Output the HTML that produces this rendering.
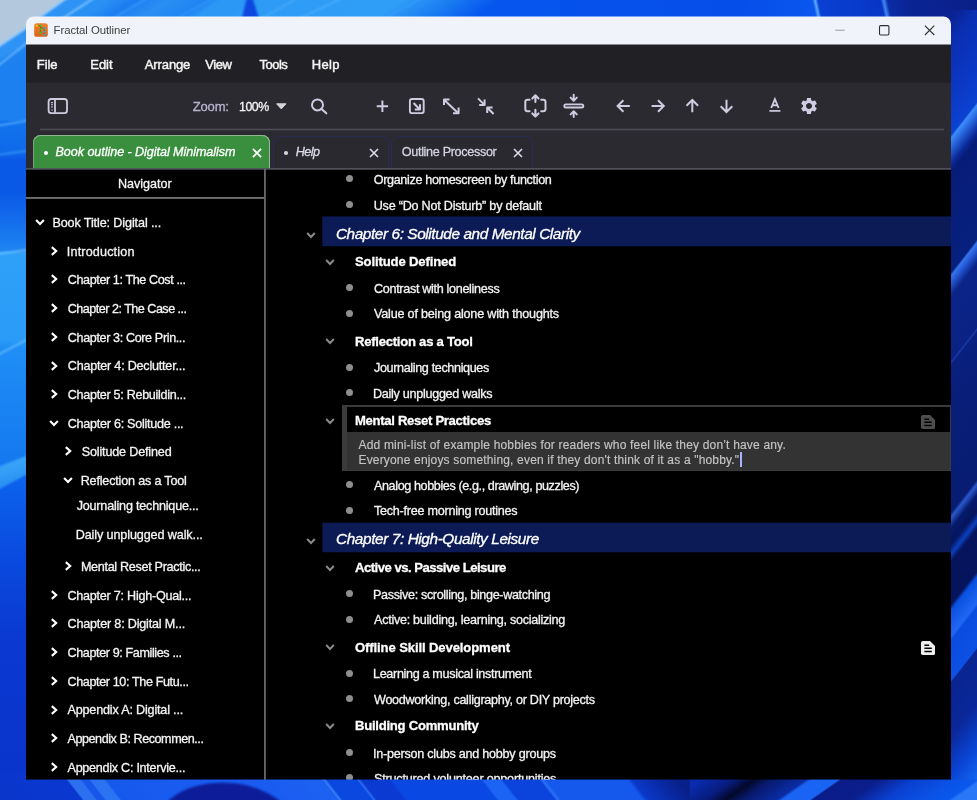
<!DOCTYPE html>
<html lang="en"><head><meta charset="utf-8"><title>Fractal Outliner</title>
<style>
html,body{margin:0;padding:0}
body{width:977px;height:800px;overflow:hidden;position:relative;background:#0b49d8;font-family:"Liberation Sans",sans-serif}
.abs,.t,svg.i{position:absolute}
.t{white-space:nowrap;line-height:20px;height:20px;display:block;-webkit-text-stroke:0.3px currentColor}
#win{position:absolute;left:26px;top:40px;width:925px;height:740px;background:#000;overflow:hidden}
#page{position:absolute;left:0;top:0;width:977px;height:800px}
</style></head><body>
<svg class="abs" style="left:0;top:0" width="977" height="800" viewBox="0 0 977 800">
<defs>
<linearGradient id="gL" x1="0" y1="0" x2="0" y2="800" gradientUnits="userSpaceOnUse">
<stop offset="0" stop-color="#2a8ef3"/><stop offset="0.08" stop-color="#1c80f0"/><stop offset="0.15" stop-color="#1c80f0"/><stop offset="0.152" stop-color="#1272ec"/>
<stop offset="0.19" stop-color="#0f6aea"/><stop offset="0.20" stop-color="#0a58e6"/><stop offset="0.24" stop-color="#0a58e6"/><stop offset="0.30" stop-color="#1a7cf0"/><stop offset="0.313" stop-color="#1f84f2"/>
<stop offset="0.316" stop-color="#2fa0f8"/><stop offset="0.425" stop-color="#2a9cf8"/><stop offset="0.435" stop-color="#1f8ef5"/><stop offset="0.583" stop-color="#1478f0"/>
<stop offset="0.59" stop-color="#0c64ee"/><stop offset="0.7" stop-color="#0a4ade"/><stop offset="0.8" stop-color="#0a38d0"/><stop offset="1" stop-color="#0a34cc"/>
</linearGradient>
<linearGradient id="gT" x1="0" y1="0" x2="977" y2="0" gradientUnits="userSpaceOnUse" gradientTransform="translate(0,8) skewX(-55) translate(0,-8)">
<stop offset="0" stop-color="#2b8ff2"/><stop offset="0.10" stop-color="#2a90f4"/><stop offset="0.125" stop-color="#1c7cf0"/><stop offset="0.16" stop-color="#2a8ef4"/><stop offset="0.20" stop-color="#1f84f2"/><stop offset="0.215" stop-color="#2c98f6"/><stop offset="0.245" stop-color="#2c98f6"/>
<stop offset="0.262" stop-color="#2e9cf6"/><stop offset="0.40" stop-color="#2f9ef7"/>
<stop offset="0.45" stop-color="#1b7df2"/><stop offset="0.50" stop-color="#0556ee"/><stop offset="1" stop-color="#0552ec"/>
</linearGradient>
<linearGradient id="gT2" x1="0" y1="0" x2="977" y2="0" gradientUnits="userSpaceOnUse" gradientTransform="translate(0,8) skewX(12) translate(0,-8)">
<stop offset="0.5" stop-color="#0552ec"/><stop offset="0.75" stop-color="#064eea"/>
<stop offset="0.833" stop-color="#0a56ee"/><stop offset="0.836" stop-color="#5aa8ff"/><stop offset="0.839" stop-color="#0a40d4"/><stop offset="0.903" stop-color="#0836c4"/><stop offset="0.906" stop-color="#4088f4"/>
<stop offset="0.910" stop-color="#0a2ca8"/><stop offset="0.93" stop-color="#0a2494"/><stop offset="1" stop-color="#0a2088"/>
</linearGradient>
<linearGradient id="gR" x1="0" y1="0" x2="0" y2="800" gradientUnits="userSpaceOnUse" gradientTransform="translate(964,0) skewY(-52) translate(-964,0)">
<stop offset="0" stop-color="#0a2292"/><stop offset="0.03" stop-color="#0a2eb0"/><stop offset="0.10" stop-color="#0b38c4"/><stop offset="0.148" stop-color="#0c42d2"/>
<stop offset="0.152" stop-color="#3e8cf8"/><stop offset="0.162" stop-color="#2a6ce4"/><stop offset="0.185" stop-color="#0a2898"/><stop offset="0.195" stop-color="#071c78"/><stop offset="0.320" stop-color="#07207e"/>
<stop offset="0.324" stop-color="#3674ee"/><stop offset="0.333" stop-color="#2458d4"/><stop offset="0.350" stop-color="#0a2488"/><stop offset="0.43" stop-color="#0a2284"/><stop offset="0.432" stop-color="#1a3ca8"/><stop offset="0.436" stop-color="#0a2080"/>
<stop offset="0.5" stop-color="#081e78"/><stop offset="0.62" stop-color="#071c72"/><stop offset="0.626" stop-color="#2a58cc"/><stop offset="0.64" stop-color="#061a6c"/><stop offset="0.66" stop-color="#05155e"/><stop offset="0.672" stop-color="#0a40c0"/><stop offset="0.682" stop-color="#05145c"/>
<stop offset="0.735" stop-color="#05145c"/><stop offset="0.742" stop-color="#0a50e0"/><stop offset="0.775" stop-color="#2068f4"/><stop offset="0.78" stop-color="#0a4ce0"/><stop offset="0.83" stop-color="#0c50e4"/>
<stop offset="0.833" stop-color="#0a2490"/><stop offset="0.90" stop-color="#0a289a"/><stop offset="0.95" stop-color="#0a44d4"/><stop offset="1" stop-color="#1468f4"/>
</linearGradient>
<linearGradient id="gB1" x1="0" y1="0" x2="977" y2="0" gradientUnits="userSpaceOnUse" gradientTransform="translate(0,790) skewX(38) translate(0,-790)">
<stop offset="0" stop-color="#0a36cc"/><stop offset="0.076" stop-color="#0a38d0"/><stop offset="0.078" stop-color="#2c70f0"/><stop offset="0.09" stop-color="#2c70f0"/>
<stop offset="0.092" stop-color="#1756e8"/><stop offset="0.099" stop-color="#1756e8"/><stop offset="0.101" stop-color="#2a74f4"/><stop offset="0.114" stop-color="#2a74f4"/><stop offset="0.117" stop-color="#1559ec"/>
<stop offset="0.20" stop-color="#1a5cf0"/><stop offset="0.28" stop-color="#1a5cf0"/><stop offset="0.338" stop-color="#1c62f2"/><stop offset="0.340" stop-color="#3a80f8"/><stop offset="0.343" stop-color="#0a48e0"/>
<stop offset="0.373" stop-color="#0a48e0"/><stop offset="0.375" stop-color="#2a6cf0"/><stop offset="0.378" stop-color="#0a3ad2"/><stop offset="0.405" stop-color="#0a3ad2"/><stop offset="0.41" stop-color="#0a48e4"/>
<stop offset="0.50" stop-color="#0a48e4"/><stop offset="0.503" stop-color="#1c64f4"/><stop offset="0.52" stop-color="#1c64f4"/><stop offset="0.523" stop-color="#0a44dc"/><stop offset="0.56" stop-color="#0a44dc"/><stop offset="0.563" stop-color="#2a70f4"/>
<stop offset="0.567" stop-color="#1458ec"/><stop offset="0.65" stop-color="#1458ec"/><stop offset="0.655" stop-color="#0a38c8"/><stop offset="0.70" stop-color="#08208c"/><stop offset="1" stop-color="#08208c"/>
</linearGradient>
<linearGradient id="gB2" x1="0" y1="0" x2="977" y2="0" gradientUnits="userSpaceOnUse" gradientTransform="translate(0,790) skewX(-55) translate(0,-790)">
<stop offset="0.70" stop-color="#0a2cb0"/><stop offset="0.735" stop-color="#081c80"/><stop offset="0.757" stop-color="#03082a"/><stop offset="0.775" stop-color="#081a70"/><stop offset="0.81" stop-color="#0a2ca4"/>
<stop offset="0.815" stop-color="#1a64f4"/><stop offset="0.843" stop-color="#1a64f4"/><stop offset="0.846" stop-color="#0a1c88"/><stop offset="0.885" stop-color="#0a1e8c"/>
<stop offset="0.92" stop-color="#0a40d0"/><stop offset="0.965" stop-color="#0a54e8"/><stop offset="0.985" stop-color="#0a58ec"/><stop offset="0.99" stop-color="#2a78f8"/><stop offset="1" stop-color="#2a78f8"/>
</linearGradient>
<linearGradient id="gBand" x1="0" y1="0" x2="0.25" y2="1"><stop offset="0" stop-color="#46aefa"/><stop offset="0.5" stop-color="#35a0f6"/><stop offset="1" stop-color="#2388f2"/></linearGradient>
<filter id="bl" filterUnits="userSpaceOnUse" x="-30" y="-30" width="1037" height="860"><feGaussianBlur stdDeviation="0.9"/></filter>
</defs>
<rect width="977" height="800" fill="#0b49d8"/>
<rect x="0" y="0" width="560" height="30" fill="url(#gT)"/><rect x="560" y="0" width="417" height="30" fill="url(#gT2)"/>
<rect x="0" y="770" width="690" height="30" fill="url(#gB1)"/>
<rect x="690" y="770" width="287" height="30" fill="url(#gB2)"/>
<rect x="0" y="0" width="40" height="772" fill="url(#gL)"/>
<rect x="937" y="10" width="40" height="790" fill="url(#gR)"/>
<g filter="url(#bl)">
<path d="M160,812 Q175,786 215,783 Q262,780 292,812Z" fill="#0a1e98"/>
<polygon points="242,18 247,-3 252,-3 259,18" fill="#0a46e0"/>
<polyline points="300,-3 262,18" stroke="#62b8ff" stroke-width="1.4" fill="none" opacity=".7"/><polyline points="345,-3 300,18" stroke="#62b8ff" stroke-width="1.4" fill="none" opacity=".6"/><polyline points="425,-3 385,18" stroke="#4aa4fa" stroke-width="1.4" fill="none" opacity=".6"/>
<polygon points="-30,-30 80,-30 66,-2 40,17 26,28 -30,66" fill="#b3c8dd"/>
<polygon points="66,-2 40,17 26,28 -10,52 -10,66 26,44 60,20 95,-2" fill="#2d93f4"/>
<polyline points="68,-3 40,17 26,28 -10,52" stroke="#8fd0ff" stroke-width="1.6" fill="none"/>
<polyline points="96,-3 60,20 26,44 -10,72" stroke="#7cc8ff" stroke-width="1.5" fill="none"/>
<polyline points="150,-3 120,14 100,30" stroke="#4aaaff" stroke-width="1.4" fill="none" opacity=".7"/>
<polyline points="215,-3 170,22" stroke="#4aaaff" stroke-width="1.4" fill="none" opacity=".6"/>
<polyline points="-10,127 26,121 40,119" stroke="#62baff" stroke-width="1.6" fill="none" opacity=".9"/>
<polyline points="-10,156 26,151 40,149" stroke="#48a4fa" stroke-width="1.6" fill="none" opacity=".8"/>
<polyline points="-10,255 26,250 40,248" stroke="#7accff" stroke-width="1.5" fill="none" opacity=".9"/>
<polygon points="-10,470 26,456 44,449 44,468 26,475 -10,494" fill="url(#gBand)"/>
<polyline points="-10,359 26,340 40,334" stroke="#6cc6ff" stroke-width="1.7" fill="none" opacity=".85"/>
</g>
</svg>
<div id="win"></div>
<div id="page">
<div class="abs" style="left:26px;top:40px;width:925px;height:43px;background:#212125;"></div>
<svg class="abs" style="left:20px;top:10px" width="940" height="40" viewBox="20 10 940 40"><path d="M26 44.6V24.2A7.7 7.7 0 0 1 33.7 16.45H943.3A7.7 7.7 0 0 1 951 24.2V44.6Z" fill="#f0f3f9"/></svg>
<div class="abs" style="left:26px;top:83px;width:925px;height:86px;background:#2a2a30;"></div>
<svg class="abs" style="left:26px;top:82px" width="925" height="2" viewBox="26 82 925 2"><rect x="26" y="82" width="925" height="0.7" fill="#212125"/><rect x="26" y="82.7" width="925" height="1.3" fill="#2a2a30"/></svg>
<svg class="i" style="left:33.5px;top:23px;" width="14" height="14" viewBox="0 0 14 14"><defs><linearGradient id="og" x1="0" y1="0" x2="0" y2="1"><stop offset="0" stop-color="#f0832a"/><stop offset="1" stop-color="#d9621a"/></linearGradient></defs>
<rect x="0.2" y="0.2" width="13.6" height="13.6" rx="2.6" fill="url(#og)"/>
<path d="M3 2.6H6.5V9.6M6.5 5H10.3V12" stroke="#7a4a10" stroke-width=".7" fill="none"/>
<circle cx="2.8" cy="2.8" r="1" fill="#e8e020"/><circle cx="6.5" cy="2.6" r="1.1" fill="#22c832"/><circle cx="6.5" cy="6.2" r="1.1" fill="#22c832"/><circle cx="6.5" cy="9.6" r="1.1" fill="#22c832"/>
<circle cx="10.4" cy="5.2" r="1.1" fill="#18b0f0"/><circle cx="10.4" cy="8.6" r="1.1" fill="#18b0f0"/><circle cx="10.4" cy="11.8" r="1.1" fill="#18b0f0"/></svg>
<svg class="i" style="left:830px;top:20px;" width="110" height="20" viewBox="0 0 110 20"><path d="M5.2 10.2H14.7" stroke="#9a9a9a" stroke-width="1"/>
<rect x="49.5" y="5.6" width="9.4" height="9.4" rx="1.2" fill="none" stroke="#2e2e2e" stroke-width="1.1"/>
<path d="M94.9 5.6L104.3 15M104.3 5.6L94.9 15" stroke="#2e2e2e" stroke-width="1.1" fill="none"/></svg>
<svg class="i" style="left:0px;top:83px;" width="977" height="52" viewBox="0 83 977 52"><g fill="none" stroke="#cfcbe1" stroke-width="2" stroke-linecap="round" stroke-linejoin="round">
<rect x="48.6" y="99" width="18.4" height="14.2" rx="2.6" stroke-width="1.8"/><path d="M55 99.4V112.8" stroke-linecap="butt" stroke-width="1.8"/>
<path d="M51 102.6h2M51 104.8h2M51 107h2" stroke-width="1.1" stroke-linecap="butt"/><path d="M51 110h2" stroke-width="1.3" stroke="#77768a" stroke-linecap="butt"/>
<circle cx="317.5" cy="104.9" r="5.5" stroke-width="2"/><path d="M321.8 109.2L326.3 113.3" stroke-width="2.1"/>
<path d="M382.4 100.6V111.9M376.7 106.2H388.1" stroke-linecap="butt" stroke-width="2"/>
<rect x="409.9" y="99" width="13.8" height="14.1" rx="2.2" stroke-width="1.9"/><path d="M413.6 103L419.6 109.2M420 104.2V109.6H414.8" stroke-linecap="butt"/>
<path d="M444.6 100.2L458 113M444 105V99.4H449.6M453 113.2H458.6V107.6" stroke-linecap="butt"/>
<path d="M478 98.4L484.2 104.6M484.6 99.6V105H479.2M493.6 114L487.6 108M487.2 113V107.6H492.6" stroke-linecap="butt"/>
<path d="M529.6 99.8H527.6Q525.3 99.8 525.3 102.1V109Q525.3 111.3 527.6 111.3H529.6M541.2 99.8H543.2Q545.5 99.8 545.5 102.1V109Q545.5 111.3 543.2 111.3H541.2"/>
<path d="M535.4 102V95.6M532.3 98.4L535.4 95.3L538.5 98.4M535.4 109.8V116.2M532.3 113.4L535.4 116.5L538.5 113.4" stroke-width="2.1"/>
<rect x="564.3" y="104.4" width="19" height="3.1" rx="1.55" stroke-width="1.9"/>
<path d="M573.7 94.8V100.4M570.6 97.6L573.7 100.7L576.8 97.6M573.7 117V111.6M570.6 114.4L573.7 111.3L576.8 114.4" stroke-width="2"/>
<path d="M629.8 106H618M623.4 100.2L617.6 106L623.4 111.8" stroke-linecap="butt" stroke-linejoin="miter"/>
<path d="M651.6 106H663.4M658 100.2L663.8 106L658 111.8" stroke-linecap="butt" stroke-linejoin="miter"/>
<path d="M692.3 112.2V100.4M686.5 105.8L692.3 100L698.1 105.8" stroke-linecap="butt" stroke-linejoin="miter"/>
<path d="M726.5 99.8V111.6M720.7 106.2L726.5 112L732.3 106.2" stroke-linecap="butt" stroke-linejoin="miter"/>
<path d="M769.4 110.9H780.4" stroke-linecap="butt" stroke-width="1.7"/><path d="M771.2 108L774.9 99.2L778.6 108M772.6 105.2H777.2" stroke-linecap="butt" stroke-linejoin="miter" stroke-width="1.9"/>
</g>
<path d="M276.6 103.8H286L281.3 108.9Z" fill="#d4d4d4" stroke="#d4d4d4" stroke-width="1" stroke-linejoin="round"/>
<g transform="translate(799,96) scale(0.8333)"><path fill="#cfcbe1" d="M19.14 12.94c.04-.3.06-.61.06-.94 0-.32-.02-.64-.07-.94l2.03-1.58c.18-.14.23-.41.12-.61l-1.92-3.32c-.12-.22-.37-.29-.59-.22l-2.39.96c-.5-.38-1.03-.7-1.62-.94l-.36-2.54c-.04-.24-.24-.41-.48-.41h-3.84c-.24 0-.43.17-.47.41l-.36 2.54c-.59.24-1.13.57-1.62.94l-2.39-.96c-.22-.08-.47 0-.59.22L2.74 8.87c-.12.21-.08.47.12.61l2.03 1.58c-.05.3-.09.63-.09.94s.02.64.07.94l-2.03 1.58c-.18.14-.23.41-.12.61l1.92 3.32c.12.22.37.29.59.22l2.39-.96c.5.38 1.03.7 1.62.94l.36 2.54c.05.24.24.41.48.41h3.84c.24 0 .44-.17.47-.41l.36-2.54c.59-.24 1.13-.56 1.62-.94l2.39.96c.22.08.47 0 .59-.22l1.92-3.32c.12-.22.07-.47-.12-.61l-2.01-1.58zM12 15.6c-1.98 0-3.6-1.62-3.6-3.6s1.62-3.6 3.6-3.6 3.6 1.62 3.6 3.6-1.62 3.6-3.6 3.6z"/></g>
<rect x="40" y="128.7" width="904" height="1.6" fill="#4c4c55"/></svg>
<div class="abs" style="left:32.5px;top:135px;width:237.4px;height:33.5px;background:#3a8f3e;border-radius:8px 8px 0 0;box-shadow:inset 0 1px 0 #8fb892, inset 1px 0 0 #7aa57c, inset -1px 0 0 #9ab89c;"></div>
<div class="abs" style="left:273px;top:135.5px;width:113.5px;height:33px;background:#29292f;border-radius:8px 8px 0 0;border:1px solid #2b2b58;border-bottom:none;box-sizing:content-box;"></div>
<div class="abs" style="left:391px;top:135.5px;width:140px;height:33px;background:#29292f;border-radius:8px 8px 0 0;border:1px solid #2b2b58;border-bottom:none;box-sizing:content-box;"></div>
<div class="abs" style="left:44px;top:151px;width:4px;height:4px;background:#ffffff;border-radius:50%;"></div>
<div class="abs" style="left:284px;top:151.2px;width:3.6px;height:3.6px;background:#d0d0dc;border-radius:50%;"></div>
<svg class="i" style="left:249.5px;top:145.7px;" width="14" height="14" viewBox="0 0 14 14"><path d="M2.9000000000000004 2.9000000000000004L11.1 11.1M11.1 2.9000000000000004L2.9000000000000004 11.1" stroke="#ffffff" stroke-width="1.7" fill="none"/></svg>
<svg class="i" style="left:367.4px;top:145.7px;" width="14" height="14" viewBox="0 0 14 14"><path d="M3.0 3.0L11.0 11.0M11.0 3.0L3.0 11.0" stroke="#dcdcea" stroke-width="1.6" fill="none"/></svg>
<svg class="i" style="left:511.20000000000005px;top:145.7px;" width="14" height="14" viewBox="0 0 14 14"><path d="M3.0 3.0L11.0 11.0M11.0 3.0L3.0 11.0" stroke="#dcdcea" stroke-width="1.6" fill="none"/></svg>
<div class="abs" style="left:26px;top:169px;width:925px;height:611px;background:#000;"></div>
<svg class="i" style="left:26px;top:167px;" width="925" height="4" viewBox="0 0 925 4"><rect x="0" y="1.1" width="925" height="1.6" fill="#55555e"/></svg>
<svg class="i" style="left:263px;top:169px;" width="4" height="611" viewBox="0 0 4 611"><rect x="1.05" y="0" width="1.75" height="611" fill="#6c6c6c"/></svg>
<svg class="i" style="left:26px;top:196px;" width="240" height="4" viewBox="0 0 240 4"><rect x="0" y="1" width="238" height="1.9" fill="#6e6e6e"/></svg>
<svg class="i" style="left:320px;top:214px;" width="631" height="34" viewBox="320 214 631 34"><rect x="322.3" y="216.4" width="630" height="29.8" fill="#0c1b56"/></svg>
<svg class="i" style="left:320px;top:520px;" width="631" height="34" viewBox="320 520 631 34"><rect x="322.4" y="522.75" width="630" height="29.5" fill="#0c1b56"/></svg>
<div class="abs" style="left:342px;top:405.2px;width:609px;height:66.3px;background:#3b3b3b;"></div>
<div class="abs" style="left:347px;top:407px;width:603px;height:24.8px;background:#000;"></div>
<div class="abs" style="left:347px;top:431.8px;width:603px;height:38.6px;background:#333333;"></div>
<div class="abs" style="left:740.3px;top:452px;width:1.6px;height:14.5px;background:#aab2ff;"></div>
<div class="abs" style="left:346px;top:174.85px;width:7.1px;height:7.1px;background:#8e8e8e;border-radius:50%;"></div>
<div class="abs" style="left:346px;top:200.85px;width:7.1px;height:7.1px;background:#8e8e8e;border-radius:50%;"></div>
<div class="abs" style="left:346px;top:284.15px;width:7.1px;height:7.1px;background:#8e8e8e;border-radius:50%;"></div>
<div class="abs" style="left:346px;top:310.05px;width:7.1px;height:7.1px;background:#8e8e8e;border-radius:50%;"></div>
<div class="abs" style="left:346px;top:363.95px;width:7.1px;height:7.1px;background:#8e8e8e;border-radius:50%;"></div>
<div class="abs" style="left:346px;top:389.34999999999997px;width:7.1px;height:7.1px;background:#8e8e8e;border-radius:50%;"></div>
<div class="abs" style="left:346px;top:481.05px;width:7.1px;height:7.1px;background:#8e8e8e;border-radius:50%;"></div>
<div class="abs" style="left:346px;top:507.05px;width:7.1px;height:7.1px;background:#8e8e8e;border-radius:50%;"></div>
<div class="abs" style="left:346px;top:589.95px;width:7.1px;height:7.1px;background:#8e8e8e;border-radius:50%;"></div>
<div class="abs" style="left:346px;top:616.2px;width:7.1px;height:7.1px;background:#8e8e8e;border-radius:50%;"></div>
<div class="abs" style="left:346px;top:669.5500000000001px;width:7.1px;height:7.1px;background:#8e8e8e;border-radius:50%;"></div>
<div class="abs" style="left:346px;top:695.2px;width:7.1px;height:7.1px;background:#8e8e8e;border-radius:50%;"></div>
<div class="abs" style="left:346px;top:748.7px;width:7.1px;height:7.1px;background:#8e8e8e;border-radius:50%;"></div>
<div class="abs" style="left:346px;top:773.95px;width:7.1px;height:7.1px;background:#8e8e8e;border-radius:50%;"></div>
<svg class="i" style="left:303.4px;top:226.9px;" width="16" height="16" viewBox="0 0 16 16"><path d="M4.2 6.0L8 10.0L11.8 6.0" stroke="#8c8c8c" stroke-width="1.9" fill="none" stroke-linejoin="miter"/></svg>
<svg class="i" style="left:303.4px;top:532.8px;" width="16" height="16" viewBox="0 0 16 16"><path d="M4.2 6.0L8 10.0L11.8 6.0" stroke="#8c8c8c" stroke-width="1.9" fill="none" stroke-linejoin="miter"/></svg>
<svg class="i" style="left:322.3px;top:253.7px;" width="16" height="16" viewBox="0 0 16 16"><path d="M4.2 6.0L8 10.0L11.8 6.0" stroke="#8c8c8c" stroke-width="1.9" fill="none" stroke-linejoin="miter"/></svg>
<svg class="i" style="left:322.3px;top:333px;" width="16" height="16" viewBox="0 0 16 16"><path d="M4.2 6.0L8 10.0L11.8 6.0" stroke="#8c8c8c" stroke-width="1.9" fill="none" stroke-linejoin="miter"/></svg>
<svg class="i" style="left:322.3px;top:412.6px;" width="16" height="16" viewBox="0 0 16 16"><path d="M4.2 6.0L8 10.0L11.8 6.0" stroke="#8c8c8c" stroke-width="1.9" fill="none" stroke-linejoin="miter"/></svg>
<svg class="i" style="left:322.3px;top:559.75px;" width="16" height="16" viewBox="0 0 16 16"><path d="M4.2 6.0L8 10.0L11.8 6.0" stroke="#8c8c8c" stroke-width="1.9" fill="none" stroke-linejoin="miter"/></svg>
<svg class="i" style="left:322.3px;top:638.6px;" width="16" height="16" viewBox="0 0 16 16"><path d="M4.2 6.0L8 10.0L11.8 6.0" stroke="#8c8c8c" stroke-width="1.9" fill="none" stroke-linejoin="miter"/></svg>
<svg class="i" style="left:322.3px;top:718.25px;" width="16" height="16" viewBox="0 0 16 16"><path d="M4.2 6.0L8 10.0L11.8 6.0" stroke="#8c8c8c" stroke-width="1.9" fill="none" stroke-linejoin="miter"/></svg>
<svg class="i" style="left:31.5px;top:214.0px;" width="16" height="16" viewBox="0 0 16 16"><path d="M4.1 6.0L8 10.0L11.9 6.0" stroke="#ffffff" stroke-width="2.1" fill="none" stroke-linejoin="miter"/></svg>
<svg class="i" style="left:46px;top:242.6px;" width="16" height="16" viewBox="0 0 16 16"><path d="M5.8 4.1L10.2 8L5.8 11.9" stroke="#ffffff" stroke-width="2.1" fill="none" stroke-linejoin="miter"/></svg>
<svg class="i" style="left:46px;top:271.3px;" width="16" height="16" viewBox="0 0 16 16"><path d="M5.8 4.1L10.2 8L5.8 11.9" stroke="#ffffff" stroke-width="2.1" fill="none" stroke-linejoin="miter"/></svg>
<svg class="i" style="left:46px;top:300.0px;" width="16" height="16" viewBox="0 0 16 16"><path d="M5.8 4.1L10.2 8L5.8 11.9" stroke="#ffffff" stroke-width="2.1" fill="none" stroke-linejoin="miter"/></svg>
<svg class="i" style="left:46px;top:328.6px;" width="16" height="16" viewBox="0 0 16 16"><path d="M5.8 4.1L10.2 8L5.8 11.9" stroke="#ffffff" stroke-width="2.1" fill="none" stroke-linejoin="miter"/></svg>
<svg class="i" style="left:46px;top:357.6px;" width="16" height="16" viewBox="0 0 16 16"><path d="M5.8 4.1L10.2 8L5.8 11.9" stroke="#ffffff" stroke-width="2.1" fill="none" stroke-linejoin="miter"/></svg>
<svg class="i" style="left:46px;top:386.0px;" width="16" height="16" viewBox="0 0 16 16"><path d="M5.8 4.1L10.2 8L5.8 11.9" stroke="#ffffff" stroke-width="2.1" fill="none" stroke-linejoin="miter"/></svg>
<svg class="i" style="left:46px;top:414.7px;" width="16" height="16" viewBox="0 0 16 16"><path d="M4.1 6.0L8 10.0L11.9 6.0" stroke="#ffffff" stroke-width="2.1" fill="none" stroke-linejoin="miter"/></svg>
<svg class="i" style="left:60.3px;top:443.20000000000005px;" width="16" height="16" viewBox="0 0 16 16"><path d="M5.8 4.1L10.2 8L5.8 11.9" stroke="#ffffff" stroke-width="2.1" fill="none" stroke-linejoin="miter"/></svg>
<svg class="i" style="left:60.3px;top:471.9px;" width="16" height="16" viewBox="0 0 16 16"><path d="M4.1 6.0L8 10.0L11.9 6.0" stroke="#ffffff" stroke-width="2.1" fill="none" stroke-linejoin="miter"/></svg>
<svg class="i" style="left:60.3px;top:558.2px;" width="16" height="16" viewBox="0 0 16 16"><path d="M5.8 4.1L10.2 8L5.8 11.9" stroke="#ffffff" stroke-width="2.1" fill="none" stroke-linejoin="miter"/></svg>
<svg class="i" style="left:46px;top:586.9px;" width="16" height="16" viewBox="0 0 16 16"><path d="M5.8 4.1L10.2 8L5.8 11.9" stroke="#ffffff" stroke-width="2.1" fill="none" stroke-linejoin="miter"/></svg>
<svg class="i" style="left:46px;top:615.35px;" width="16" height="16" viewBox="0 0 16 16"><path d="M5.8 4.1L10.2 8L5.8 11.9" stroke="#ffffff" stroke-width="2.1" fill="none" stroke-linejoin="miter"/></svg>
<svg class="i" style="left:46px;top:644.1px;" width="16" height="16" viewBox="0 0 16 16"><path d="M5.8 4.1L10.2 8L5.8 11.9" stroke="#ffffff" stroke-width="2.1" fill="none" stroke-linejoin="miter"/></svg>
<svg class="i" style="left:46px;top:672.85px;" width="16" height="16" viewBox="0 0 16 16"><path d="M5.8 4.1L10.2 8L5.8 11.9" stroke="#ffffff" stroke-width="2.1" fill="none" stroke-linejoin="miter"/></svg>
<svg class="i" style="left:46px;top:701.6px;" width="16" height="16" viewBox="0 0 16 16"><path d="M5.8 4.1L10.2 8L5.8 11.9" stroke="#ffffff" stroke-width="2.1" fill="none" stroke-linejoin="miter"/></svg>
<svg class="i" style="left:46px;top:730.0px;" width="16" height="16" viewBox="0 0 16 16"><path d="M5.8 4.1L10.2 8L5.8 11.9" stroke="#ffffff" stroke-width="2.1" fill="none" stroke-linejoin="miter"/></svg>
<svg class="i" style="left:46px;top:758.8000000000001px;" width="16" height="16" viewBox="0 0 16 16"><path d="M5.8 4.1L10.2 8L5.8 11.9" stroke="#ffffff" stroke-width="2.1" fill="none" stroke-linejoin="miter"/></svg>
<svg class="i" style="left:920.7px;top:414.9px;" width="14.2" height="14" viewBox="0 0 14.2 14"><path d="M1.8 0H9L14.2 5.2V12.2Q14.2 14 12.4 14H1.8Q0 14 0 12.2V1.8Q0 0 1.8 0Z" fill="#4e4e4e"/><path d="M3.4 4.2H8.2M3.4 7.3H10.8M3.4 10.4H10.8" stroke="#000" stroke-width="1.5"/></svg>
<svg class="i" style="left:920.6px;top:641px;" width="14.2" height="14" viewBox="0 0 14.2 14"><path d="M1.8 0H9L14.2 5.2V12.2Q14.2 14 12.4 14H1.8Q0 14 0 12.2V1.8Q0 0 1.8 0Z" fill="#eeeeee"/><path d="M3.4 4.2H8.2M3.4 7.3H10.8M3.4 10.4H10.8" stroke="#000" stroke-width="1.5"/></svg>
<span class="t" style="left:53.60px;top:20.00px;font-size:11.4px;letter-spacing:-0.084px;color:#404040;-webkit-text-stroke:0;">Fractal Outliner</span>
<span class="t" style="left:36.80px;top:55.00px;font-size:13px;letter-spacing:-0.072px;color:#f4f4f4;-webkit-text-stroke:0.45px currentColor;">File</span>
<span class="t" style="left:90.25px;top:55.00px;font-size:13px;letter-spacing:-0.013px;color:#f4f4f4;-webkit-text-stroke:0.45px currentColor;">Edit</span>
<span class="t" style="left:144.80px;top:55.00px;font-size:13px;letter-spacing:-0.120px;color:#f4f4f4;-webkit-text-stroke:0.45px currentColor;">Arrange</span>
<span class="t" style="left:205.30px;top:55.00px;font-size:13px;letter-spacing:-0.418px;color:#f4f4f4;-webkit-text-stroke:0.45px currentColor;">View</span>
<span class="t" style="left:259.60px;top:55.00px;font-size:13px;letter-spacing:-0.537px;color:#f4f4f4;-webkit-text-stroke:0.45px currentColor;">Tools</span>
<span class="t" style="left:311.70px;top:55.00px;font-size:13px;letter-spacing:0.365px;color:#f4f4f4;-webkit-text-stroke:0.45px currentColor;">Help</span>
<span class="t" style="left:192.80px;top:97.00px;font-size:13px;letter-spacing:-0.182px;color:#b9b5d2;">Zoom:</span>
<span class="t" style="left:239.00px;top:97.00px;font-size:12.4px;letter-spacing:-0.458px;color:#f4f4f4;">100%</span>
<span class="t" style="left:55.50px;top:142.00px;font-size:12.6px;letter-spacing:-0.062px;color:#ffffff;font-style:italic;">Book outline - Digital Minimalism</span>
<span class="t" style="left:295.80px;top:142.00px;font-size:12.6px;letter-spacing:-0.566px;color:#dcdcea;font-style:italic;">Help</span>
<span class="t" style="left:401.80px;top:142.00px;font-size:12.6px;letter-spacing:-0.319px;color:#d2d2e2;">Outline Processor</span>
<span class="t" style="left:117.90px;top:174.00px;font-size:12.6px;letter-spacing:-0.001px;color:#f4f4f4;">Navigator</span>
<span class="t" style="left:52.40px;top:213.00px;font-size:12.6px;letter-spacing:-0.110px;color:#f4f4f4;">Book Title: Digital ...</span>
<span class="t" style="left:66.80px;top:242.00px;font-size:12.6px;letter-spacing:0.163px;color:#f4f4f4;">Introduction</span>
<span class="t" style="left:67.80px;top:270.00px;font-size:12.6px;letter-spacing:-0.404px;color:#f4f4f4;">Chapter 1: The Cost ...</span>
<span class="t" style="left:67.80px;top:299.00px;font-size:12.6px;letter-spacing:-0.518px;color:#f4f4f4;">Chapter 2: The Case ...</span>
<span class="t" style="left:67.80px;top:328.00px;font-size:12.6px;letter-spacing:-0.377px;color:#f4f4f4;">Chapter 3: Core Prin...</span>
<span class="t" style="left:67.80px;top:356.00px;font-size:12.6px;letter-spacing:-0.218px;color:#f4f4f4;">Chapter 4: Declutter...</span>
<span class="t" style="left:67.80px;top:385.00px;font-size:12.6px;letter-spacing:-0.310px;color:#f4f4f4;">Chapter 5: Rebuildin...</span>
<span class="t" style="left:67.80px;top:414.00px;font-size:12.6px;letter-spacing:-0.273px;color:#f4f4f4;">Chapter 6: Solitude ...</span>
<span class="t" style="left:81.70px;top:442.00px;font-size:12.6px;letter-spacing:-0.161px;color:#f4f4f4;">Solitude Defined</span>
<span class="t" style="left:80.70px;top:471.00px;font-size:12.6px;letter-spacing:-0.185px;color:#f4f4f4;">Reflection as a Tool</span>
<span class="t" style="left:76.70px;top:496.00px;font-size:12.6px;letter-spacing:-0.210px;color:#f4f4f4;">Journaling technique...</span>
<span class="t" style="left:75.70px;top:525.00px;font-size:12.6px;letter-spacing:-0.110px;color:#f4f4f4;">Daily unplugged walk...</span>
<span class="t" style="left:80.90px;top:557.00px;font-size:12.6px;letter-spacing:-0.308px;color:#f4f4f4;">Mental Reset Practic...</span>
<span class="t" style="left:67.50px;top:586.00px;font-size:12.6px;letter-spacing:-0.250px;color:#f4f4f4;">Chapter 7: High-Qual...</span>
<span class="t" style="left:67.50px;top:614.00px;font-size:12.6px;letter-spacing:-0.186px;color:#f4f4f4;">Chapter 8: Digital M...</span>
<span class="t" style="left:67.50px;top:643.00px;font-size:12.6px;letter-spacing:-0.390px;color:#f4f4f4;">Chapter 9: Families ...</span>
<span class="t" style="left:67.50px;top:672.00px;font-size:12.6px;letter-spacing:-0.384px;color:#f4f4f4;">Chapter 10: The Futu...</span>
<span class="t" style="left:67.50px;top:700.00px;font-size:12.6px;letter-spacing:-0.182px;color:#f4f4f4;">Appendix A: Digital ...</span>
<span class="t" style="left:67.50px;top:729.00px;font-size:12.6px;letter-spacing:-0.450px;color:#f4f4f4;">Appendix B: Recommen...</span>
<span class="t" style="left:67.50px;top:758.00px;font-size:12.6px;letter-spacing:-0.268px;color:#f4f4f4;">Appendix C: Intervie...</span>
<span class="t" style="left:373.70px;top:170.00px;font-size:12.6px;letter-spacing:-0.340px;color:#f4f4f4;">Organize homescreen by function</span>
<span class="t" style="left:373.70px;top:196.00px;font-size:12.6px;letter-spacing:-0.223px;color:#f4f4f4;">Use “Do Not Disturb” by default</span>
<span class="t" style="left:374.00px;top:279.00px;font-size:12.6px;letter-spacing:-0.317px;color:#f4f4f4;">Contrast with loneliness</span>
<span class="t" style="left:374.00px;top:304.00px;font-size:12.6px;letter-spacing:-0.197px;color:#f4f4f4;">Value of being alone with thoughts</span>
<span class="t" style="left:374.00px;top:358.00px;font-size:12.6px;letter-spacing:-0.361px;color:#f4f4f4;">Journaling techniques</span>
<span class="t" style="left:373.00px;top:384.00px;font-size:12.6px;letter-spacing:-0.286px;color:#f4f4f4;">Daily unplugged walks</span>
<span class="t" style="left:374.00px;top:476.00px;font-size:12.6px;letter-spacing:-0.395px;color:#f4f4f4;">Analog hobbies (e.g., drawing, puzzles)</span>
<span class="t" style="left:374.00px;top:501.00px;font-size:12.6px;letter-spacing:-0.252px;color:#f4f4f4;">Tech-free morning routines</span>
<span class="t" style="left:373.00px;top:585.00px;font-size:12.6px;letter-spacing:-0.351px;color:#f4f4f4;">Passive: scrolling, binge-watching</span>
<span class="t" style="left:374.00px;top:610.00px;font-size:12.6px;letter-spacing:-0.271px;color:#f4f4f4;">Active: building, learning, socializing</span>
<span class="t" style="left:373.00px;top:664.00px;font-size:12.6px;letter-spacing:-0.332px;color:#f4f4f4;">Learning a musical instrument</span>
<span class="t" style="left:374.00px;top:690.00px;font-size:12.6px;letter-spacing:-0.283px;color:#f4f4f4;">Woodworking, calligraphy, or DIY projects</span>
<span class="t" style="left:373.00px;top:744.00px;font-size:12.6px;letter-spacing:-0.240px;color:#f4f4f4;">In-person clubs and hobby groups</span>
<span class="t" style="left:374.00px;top:769.00px;font-size:12.6px;letter-spacing:-0.201px;color:#f4f4f4;">Structured volunteer opportunities</span>
<span class="t" style="left:355.00px;top:252.00px;font-size:13.1px;letter-spacing:-0.140px;color:#ffffff;font-weight:700;">Solitude Defined</span>
<span class="t" style="left:355.00px;top:332.00px;font-size:13.1px;letter-spacing:-0.257px;color:#ffffff;font-weight:700;">Reflection as a Tool</span>
<span class="t" style="left:355.00px;top:411.00px;font-size:13.1px;letter-spacing:-0.308px;color:#ffffff;font-weight:700;">Mental Reset Practices</span>
<span class="t" style="left:355.00px;top:558.00px;font-size:13.1px;letter-spacing:-0.500px;color:#ffffff;font-weight:700;">Active vs. Passive Leisure</span>
<span class="t" style="left:355.00px;top:638.00px;font-size:13.1px;letter-spacing:-0.118px;color:#ffffff;font-weight:700;">Offline Skill Development</span>
<span class="t" style="left:355.00px;top:716.00px;font-size:13.1px;letter-spacing:-0.255px;color:#ffffff;font-weight:700;">Building Community</span>
<span class="t" style="left:335.90px;top:224.00px;font-size:15.4px;letter-spacing:-0.426px;color:#ffffff;font-style:italic;">Chapter 6: Solitude and Mental Clarity</span>
<span class="t" style="left:336.00px;top:529.00px;font-size:15.4px;letter-spacing:-0.410px;color:#ffffff;font-style:italic;">Chapter 7: High-Quality Leisure</span>
<span class="t" style="left:358.50px;top:435.00px;font-size:12px;letter-spacing:0.178px;color:#c4c4c4;-webkit-text-stroke:0.15px currentColor;">Add mini-list of example hobbies for readers who feel like they don’t have any.</span>
<span class="t" style="left:358.50px;top:450.00px;font-size:12px;letter-spacing:0.168px;color:#c4c4c4;-webkit-text-stroke:0.15px currentColor;">Everyone enjoys something, even if they don't think of it as a "hobby."</span>
<svg class="abs" style="left:0;top:779px" width="977" height="21" viewBox="0 779 977 21"><rect x="0" y="779.55" width="690" height="21" fill="url(#gB1)"/><rect x="690" y="779.55" width="287" height="21" fill="url(#gB2)"/><path d="M160,812 Q175,786 215,783 Q262,780 292,812Z" fill="#0a1e98" filter="url(#bl)"/></svg>
</div>
</body></html>
